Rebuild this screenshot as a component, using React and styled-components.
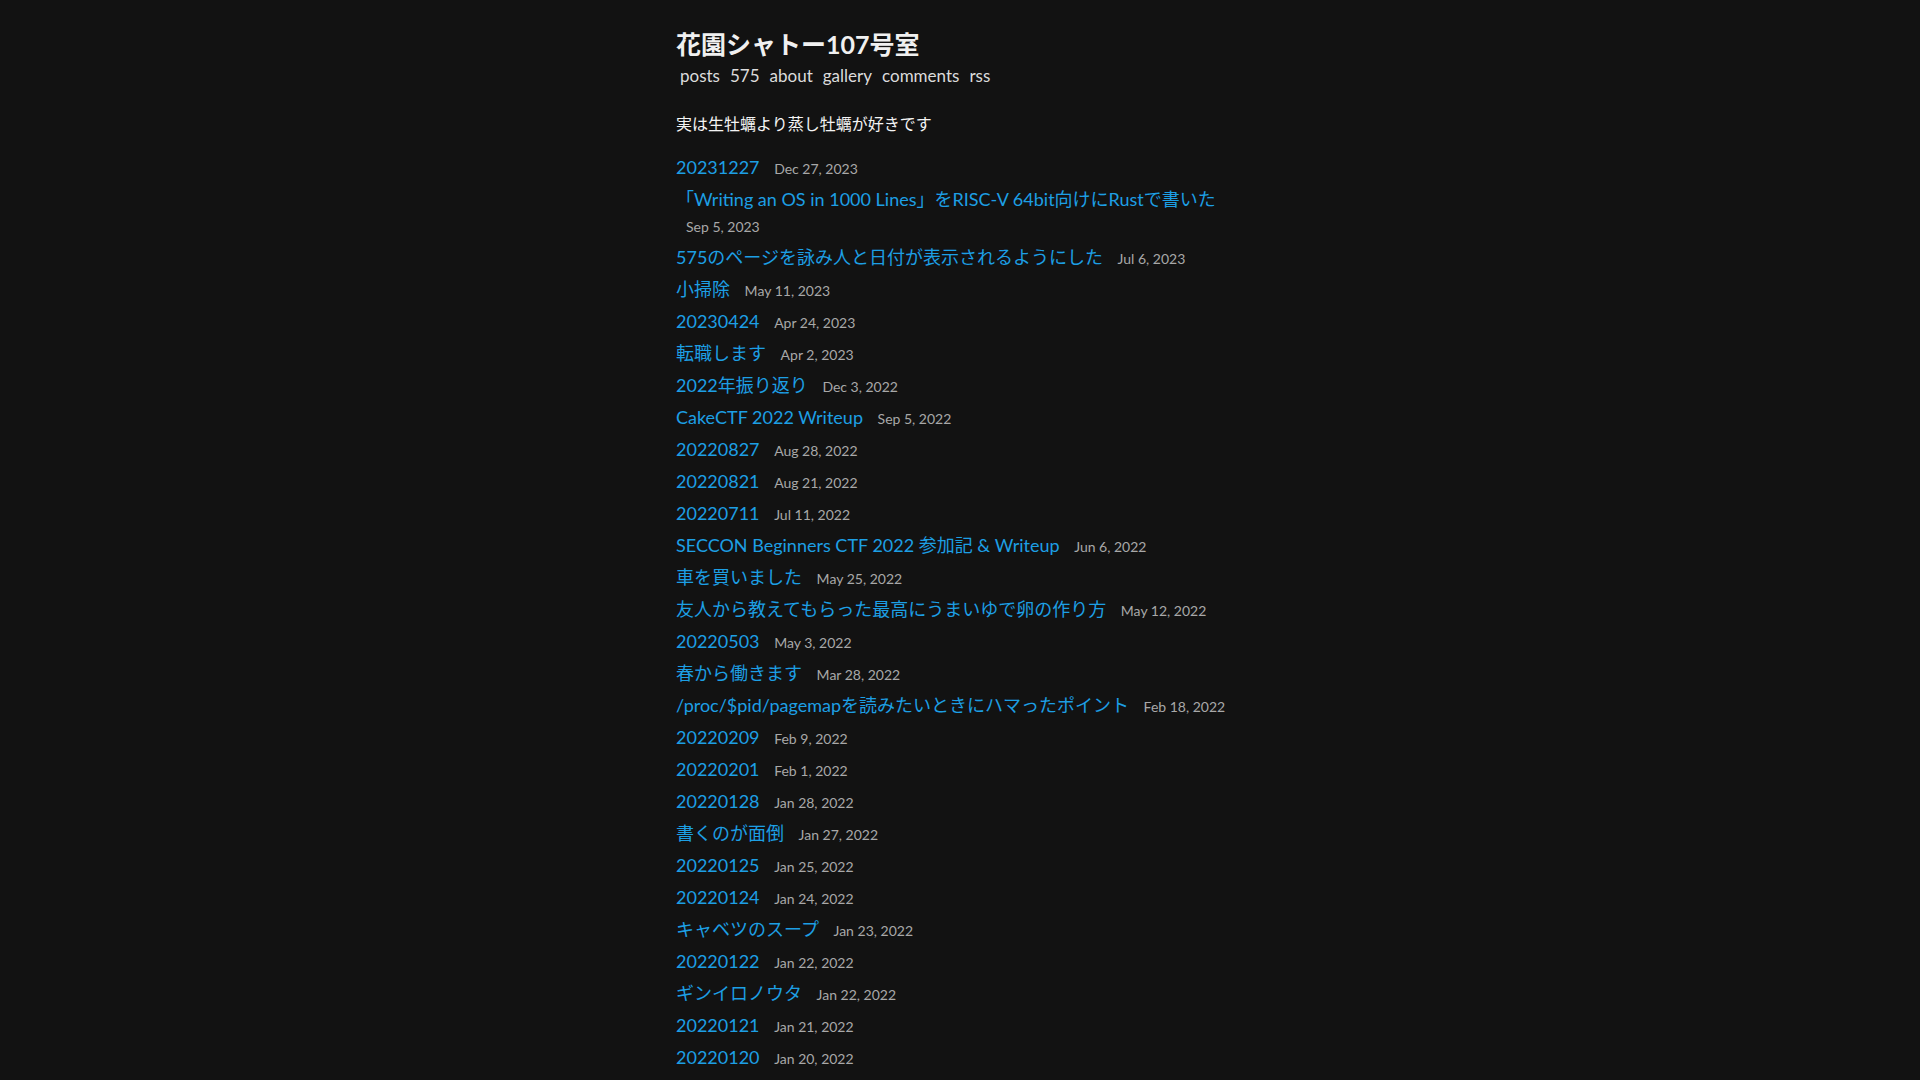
import React from 'react';
import styled, { createGlobalStyle } from 'styled-components';

const GlobalStyle = createGlobalStyle`
    html, body {
        margin: 0;
        padding: 0;
        background: #121212;
    }
    body {
        font-family: "Lato", "Noto Sans CJK JP", sans-serif;
        color: #e8e8e8;
    }
    `;

const Wrapper = styled.div`
    width: 568px;
    margin: 0 auto;
    padding-top: 26px;
    `;

const SiteTitle = styled.h1`
    margin: 0;
    font-size: 25px;
    line-height: 36px;
    font-weight: 700;
    color: #f0f0f0;
    `;

const Nav = styled.nav`
    display: flex;
    gap: 10px;
    padding-left: 4px;
    margin-top: 2px;
    font-size: 17px;
    line-height: 24px;
    `;

const NavLink = styled.a`
    color: #dcdcdc;
    text-decoration: none;
    `;

const Tagline = styled.p`
    margin: 24px 0 0;
    font-size: 16px;
    line-height: 24px;
    color: #f4f4f4;
    `;

const PostList = styled.ul`
    list-style: none;
    margin: 18px 0 0;
    padding: 0;
    `;

const PostItem = styled.li`
    font-size: 18px;
    line-height: 26px;
    margin-bottom: 6px;
    `;

const PostLink = styled.a`
    color: #1d9fe4;
    text-decoration: none;
    `;

const PostDate = styled.span`
    margin-left: 10px;
    font-size: 14px;
    line-height: 1;
    color: #a8a8a8;
    `;

const navItems = ['posts', '575', 'about', 'gallery', 'comments', 'rss'];

const posts = [
    ['20231227', 'Dec 27, 2023'],
    ['「Writing an OS in 1000 Lines」をRISC-V 64bit向けにRustで書いた', 'Sep 5, 2023'],
    ['575のページを詠み人と日付が表示されるようにした', 'Jul 6, 2023'],
    ['小掃除', 'May 11, 2023'],
    ['20230424', 'Apr 24, 2023'],
    ['転職します', 'Apr 2, 2023'],
    ['2022年振り返り', 'Dec 3, 2022'],
    ['CakeCTF 2022 Writeup', 'Sep 5, 2022'],
    ['20220827', 'Aug 28, 2022'],
    ['20220821', 'Aug 21, 2022'],
    ['20220711', 'Jul 11, 2022'],
    ['SECCON Beginners CTF 2022 参加記 & Writeup', 'Jun 6, 2022'],
    ['車を買いました', 'May 25, 2022'],
    ['友人から教えてもらった最高にうまいゆで卵の作り方', 'May 12, 2022'],
    ['20220503', 'May 3, 2022'],
    ['春から働きます', 'Mar 28, 2022'],
    ['/proc/$pid/pagemapを読みたいときにハマったポイント', 'Feb 18, 2022'],
    ['20220209', 'Feb 9, 2022'],
    ['20220201', 'Feb 1, 2022'],
    ['20220128', 'Jan 28, 2022'],
    ['書くのが面倒', 'Jan 27, 2022'],
    ['20220125', 'Jan 25, 2022'],
    ['20220124', 'Jan 24, 2022'],
    ['キャベツのスープ', 'Jan 23, 2022'],
    ['20220122', 'Jan 22, 2022'],
    ['ギンイロノウタ', 'Jan 22, 2022'],
    ['20220121', 'Jan 21, 2022'],
    ['20220120', 'Jan 20, 2022'],
];

export default function App() {
    return (
        <Wrapper>
            <GlobalStyle />
            <header>
                <SiteTitle>花園シャトー107号室</SiteTitle>
                <Nav>
                    {navItems.map((item) => (
                        <NavLink key={item} href="#">{item}</NavLink>
                    ))}
                </Nav>
            </header>
            <Tagline>実は生牡蠣より蒸し牡蠣が好きです</Tagline>
            <PostList>
                {posts.map(([title, date]) => (
                    <PostItem key={title + date}>
                        <PostLink href="#">{title}</PostLink> <PostDate>{date}</PostDate>
                    </PostItem>
                ))}
            </PostList>
        </Wrapper>
    );
}
